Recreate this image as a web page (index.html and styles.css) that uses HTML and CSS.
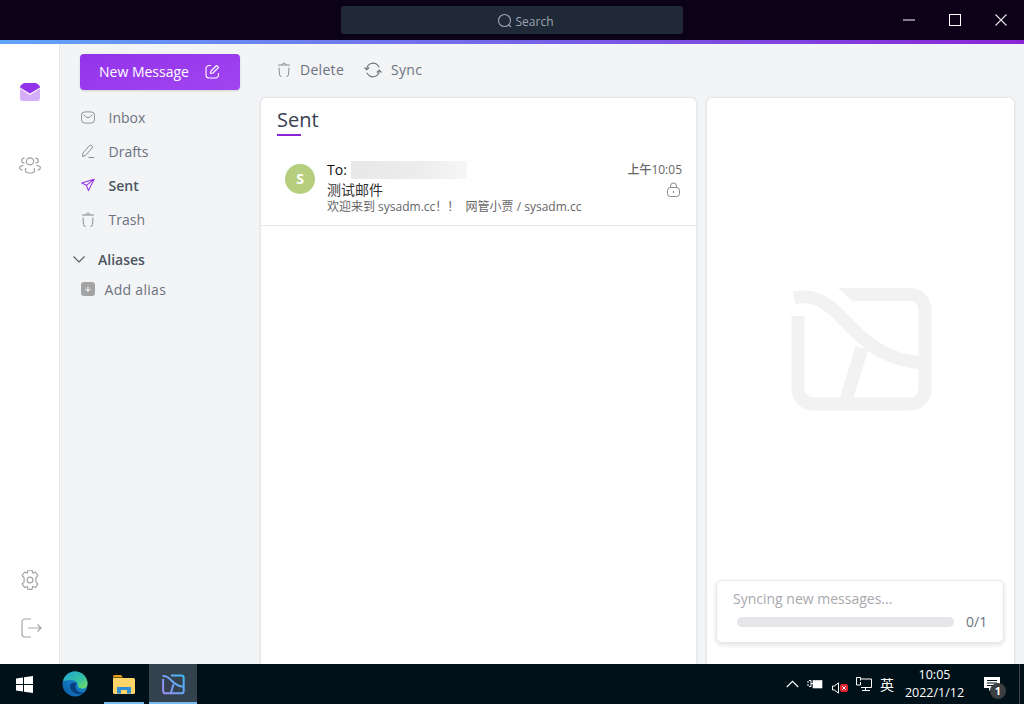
FILE: index.html
```html
<!DOCTYPE html>
<html>
  <head>
    <title>Sent</title>
    <meta charset="utf-8">
    <link rel="stylesheet" href="styles.css">
  </head>
  <body>
    <div class="titlebar">
      <div class="search">
        <svg width="16" height="16" viewBox="0 0 16 16" fill="none" stroke="#9ca3af" stroke-width="1.1"><circle cx="7.5" cy="7.5" r="6"/><path d="M12 12l2 2"/></svg>
        <span>Search</span>
      </div>
      <div class="winctl">
        <button class="winbtn"><svg width="12" height="12" viewBox="0 0 12 12"><path d="M0 6h12" stroke="#b8b3c0" stroke-width="1.4"/></svg></button>
        <button class="winbtn"><svg width="12" height="12" viewBox="0 0 12 12"><rect x=".5" y=".5" width="11" height="11" fill="none" stroke="#fff"/></svg></button>
        <button class="winbtn"><svg width="12" height="12" viewBox="0 0 12 12"><path d="M.5.5l11 11M11.5.5l-11 11" stroke="#e4e2e8" stroke-width="1.1"/></svg></button>
      </div>
    </div>
    <div class="accent"></div>

    <div class="app">
      <div class="rail">
        <div class="rail-top">
          <svg class="rail-mail" width="20" height="18" viewBox="0 0 20 18">
            <path d="M0 5.500L10 12l10-6.500V15a3 3 0 0 1-3 3H3a3 3 0 0 1-3-3z" fill="#d4aef8"/>
            <path d="M0 4.500C0 3 1 1.800 2.500 1L4 0h12l1.500 1C19 1.800 20 3 20 4.500L10 10.500z" fill="#9333ea"/>
          </svg>
          <svg class="rail-people" width="22" height="20" viewBox="0 0 24 20" fill="none" stroke="#9b9ea3" stroke-width="1.2">
            <ellipse cx="12" cy="6" rx="4" ry="3.800"/>
            <path d="M8 13.500c-1.500 1-1.500 3.500 0 4.300 2 1 6 1 8 0 1.500-.8 1.500-3.300 0-4.300"/>
            <path d="M6 2.500C4 2.500 3 4 3 5.300S4 8 6 8M18 2.500c2 0 3 1.500 3 2.800S20 8 18 8"/>
            <path d="M5 10.500c-3 0-4.300 1.500-4.300 2.500s1 2.200 3.300 2.400M19 10.500c3 0 4.300 1.500 4.300 2.500s-1 2.200-3.300 2.400"/>
          </svg>
        </div>
        <div class="rail-bottom">
          <svg width="20" height="20" viewBox="1 1 18 18" fill="none" stroke="#a3a5a9" stroke-width="1.100"><circle cx="10" cy="10" r="2.600"/><path d="M8.200 1.200h3.600l.6 2.600 2.400-1 2.300 3.200-1.800 2 0 3.800 1.800 1.700-2.300 3.300-2.400-1-.6 2.700H8.200l-.6-2.700-2.400 1-2.300-3.300 1.800-1.700V8l-1.800-2 2.300-3.200 2.400 1z" stroke-linejoin="round"/></svg>
          <svg class="rail-exit" width="21" height="20" viewBox="0 0 21 20" fill="none" stroke="#a3a5a9" stroke-width="1.200"><path d="M10 1H4a3 3 0 0 0-3 3v12a3 3 0 0 0 3 3h6M7 10h13M16.500 6.500L20 10l-3.500 3.500"/></svg>
        </div>
      </div>

      <div class="sidebar">
        <button class="compose">
          <span>New Message</span>
          <svg width="15" height="15" viewBox="0 0 15 15" fill="none" stroke="#fff" stroke-width="1.100"><path d="M6 1.500H4a3 3 0 0 0-3 3v6.500a3 3 0 0 0 3 3h6.500a3 3 0 0 0 3-3V9"/><path d="M5.500 9.500l.5-2.500L11.500 1.500l2 2L8 9z" stroke-linejoin="round"/></svg>
        </button>
        <ul class="folders">
          <li class="folder">
            <svg width="14" height="13" viewBox="0 0 15 13" fill="none" stroke="#8b8d92" stroke-width="1"><rect x=".5" y=".5" width="14" height="12" rx="3.500"/><path d="M3 3.500c2 2.500 3 3 4.500 3s2.500-.5 4.500-3"/></svg>
            <span>Inbox</span>
          </li>
          <li class="folder">
            <svg width="14" height="14" viewBox="0 0 14 14" fill="none" stroke="#8b8d92" stroke-width="1"><path d="M1.500 12.500L2 9 8.500 1.500a1.500 1.500 0 0 1 2 0l.5.500a1.500 1.500 0 0 1 0 2L4.500 11.500z" stroke-linejoin="round"/><path d="M7.500 13.500H13"/></svg>
            <span>Drafts</span>
          </li>
          <li class="folder active">
            <svg width="14" height="14" viewBox="0 0 15 14" fill="none" stroke="#9333ea" stroke-width="1.100"><path d="M14 .8L.8 4.800l5 2.500L8 13z" stroke-linejoin="round"/><path d="M14 .8L5.800 7.300"/></svg>
            <span>Sent</span>
          </li>
          <li class="folder">
            <svg width="14" height="15" viewBox="0 0 14 15" fill="none" stroke="#8b8d92" stroke-width="1"><path d="M1 3h12M5 3c0-2.500 4-2.500 4 0M2 5.500l.5 7a2 2 0 0 0 2 2M12 5.500l-.5 7a2 2 0 0 1-2 2"/></svg>
            <span>Trash</span>
          </li>
        </ul>
        <div class="aliases-head">
          <svg width="12" height="7" viewBox="0 0 12 7" fill="none" stroke="#55585e" stroke-width="1.100"><path d="M.5.500L6 6l5.500-5.500"/></svg>
          <span>Aliases</span>
        </div>
        <div class="add-alias">
          <span class="plus">+</span>
          <span>Add alias</span>
        </div>
      </div>

      <div class="main">
        <div class="toolbar">
          <div class="tool">
            <svg width="14" height="15" viewBox="0 0 14 15" fill="none" stroke="#8b8d92" stroke-width="1"><path d="M1 3h12M5 3c0-2.500 4-2.500 4 0M2 5.500l.5 7a2 2 0 0 0 2 2M12 5.500l-.5 7a2 2 0 0 1-2 2"/></svg>
            <span>Delete</span>
          </div>
          <div class="tool">
            <svg width="18" height="16" viewBox="0 0 18 16" fill="none" stroke="#6b6e73" stroke-width="1.1"><path d="M2.800 7.500a6.300 6.300 0 0 1 11.400-3.700l1 1.400M15.200 8.500a6.300 6.300 0 0 1-11.400 3.700l-1-1.400"/><path d="M.5 5.500l2.300 2.300 2.400-2.300M12.800 10.500l2.400-2.300 2.300 2.300"/></svg>
            <span>Sync</span>
          </div>
        </div>
        <div class="panes">
          <div class="card list">
            <div class="list-title">
              <h1>Sent</h1>
            </div>
            <div class="msg">
              <div class="avatar">S</div>
              <div class="msg-body">
                <div class="msg-to">To: <span class="blurred"></span></div>
                <div class="msg-subject">测试邮件</div>
                <div class="msg-snippet">欢迎来到 sysadm.cc！！&nbsp; 网管小贾 / sysadm.cc</div>
              </div>
              <div class="msg-meta">
                <span>上午10:05</span>
                <svg width="13" height="15" viewBox="0 0 13 15" fill="none" stroke="#85878c" stroke-width="1"><rect x=".5" y="5.500" width="12" height="9" rx="3"/><path d="M3.500 5.500V4a3 3 0 0 1 6 0v1.500M6.500 9v2"/></svg>
              </div>
            </div>
          </div>
          <div class="card preview">
            <div class="logo-area">
              <svg class="logo" width="142" height="123" viewBox="0 0 142 123" fill="none" stroke="#f2f2f3" stroke-width="13">
                <path d="M47 0L61 13H66V0z" fill="#f2f2f3" stroke="none"/>
                <path d="M62 6.500H119a15 15 0 0 1 15 15V101a15 15 0 0 1-15 15H22a15 15 0 0 1-15-15V28"/>
                <path d="M3 10C20 6 32 12 45 24C65 43 85 73 134 75"/>
                <path d="M71 60L55 112"/>
              </svg>
            </div>
            <div class="sync">
              <div class="sync-label">Syncing new messages...</div>
              <div class="sync-row">
                <div class="sync-bar"></div>
                <span>0/1</span>
              </div>
            </div>
          </div>
        </div>
      </div>
    </div>

    <div class="taskbar">
      <div class="task start">
        <svg width="17" height="17" viewBox="0 0 17 17" fill="#fff"><path d="M0 2.500l7-1v6.500H0zM8 1.300L17 0v8H8zM0 9h7v6.500l-7-1zM8 9h9v8l-9-1.300z"/></svg>
      </div>
      <div class="task edge-task">
        <svg width="26" height="26" viewBox="0 0 26 26">
          <defs>
            <linearGradient id="edgeA" x1="0" y1="1" x2="1" y2="0"><stop offset="0" stop-color="#0c59a4"/><stop offset="1" stop-color="#1b9de2"/></linearGradient>
            <linearGradient id="edgeB" x1="0" y1="0" x2="1" y2="1"><stop offset="0" stop-color="#1fa6d8"/><stop offset=".6" stop-color="#35c1a1"/><stop offset="1" stop-color="#7ee05a"/></linearGradient>
          </defs>
          <circle cx="13" cy="13" r="12.500" fill="url(#edgeA)"/>
          <path d="M1 10C3 3 9 .5 13 .5c7 0 12.500 5.500 12.500 12 0 3-2 5-5.500 5-2.500 0-4-1-4-2.500 0-3-2.500-6-6.500-6-3.500 0-7 1-8.500 1z" fill="url(#edgeB)"/>
          <path d="M8 15c0 5 5 9 11 8 1 0 2-1 3-2-3 1-7 0-8-3-1-2-.5-5 1-6-4-1-7 0-7 3z" fill="#0a3f80"/>
        </svg>
      </div>
      <div class="task running">
        <svg width="22" height="19" viewBox="0 0 22 19">
          <path d="M0 1.500A1.500 1.500 0 0 1 1.500 0H8l2 2.500H0z" fill="#e09f14"/>
          <path d="M0 3h20.500A1.500 1.500 0 0 1 22 4.500V17.500A1.500 1.500 0 0 1 20.500 19H1.500A1.500 1.500 0 0 1 0 17.500z" fill="#fdd667"/>
          <path d="M4 18.500V12h14v6.500h-4V15H8v3.500z" fill="#2f8fd6"/>
        </svg>
      </div>
      <div class="task running current">
        <svg width="23" height="21" viewBox="0 0 142 123" fill="none" stroke="url(#appGrad)" stroke-width="12">
          <defs>
            <linearGradient id="appGrad" gradientUnits="userSpaceOnUse" x1="0" y1="123" x2="142" y2="0"><stop offset="0" stop-color="#a78bfa"/><stop offset="1" stop-color="#38bdf8"/></linearGradient>
          </defs>
          <path d="M55 6.500H119a15 15 0 0 1 15 15V101a15 15 0 0 1-15 15H22a15 15 0 0 1-15-15V28"/>
          <path d="M3 10C20 6 32 12 45 24C65 43 85 73 134 75"/>
          <path d="M71 60L55 112"/>
        </svg>
      </div>
      <div class="tray">
        <svg class="tray-chevron" width="13" height="8" viewBox="0 0 13 8" fill="none" stroke="#fff" stroke-width="1.100"><path d="M.8 7L6.500 1.300 12.200 7"/></svg>
        <svg class="tray-power" width="16" height="11" viewBox="0 0 16 11" fill="none" stroke="#fff"><path d="M0 3h2M0 6h2M2 1.500h2v6H2M4 4.500h2"/><rect x="6" y="1.500" width="9" height="7.500" fill="#fff" stroke="#fff" stroke-width=".6"/></svg>
        <span class="tray-volume">
          <svg width="7" height="12" viewBox="0 0 7 12" fill="none" stroke="#fff"><path d="M.5 4H2.500L6.500 .8v10.400L2.500 8H.5z"/></svg>
          <svg class="mute" width="8" height="8" viewBox="0 0 8 8"><rect width="8" height="8" rx="2" fill="#e0232e"/><path d="M2.200 2.200l3.600 3.600M5.800 2.200L2.200 5.800" stroke="#fff"/></svg>
        </span>
        <svg class="tray-net" width="16" height="15" viewBox="0 0 16 15" fill="none" stroke="#fff"><path d="M.5.500h4v3M4.500 2H15.500v8.500H5M9.500 10.500v3M6 13.500h8M.5.500V8h4V5"/></svg>
        <span class="tray-ime">英</span>
        <div class="clock">
          <span>10:05</span>
          <span>2022/1/12</span>
        </div>
        <div class="notify">
          <svg width="16" height="14" viewBox="0 0 16 14"><path d="M0 0h16v11H8l-3 3v-3H0z" fill="#fff"/><path d="M3 3.500h10M3 6h10M3 8.500h7" stroke="#001320"/></svg>
          <span class="notify-count">1</span>
        </div>
      </div>
    </div>
  </body>
</html>
```

FILE: styles.css
```css
* { box-sizing: border-box; }
html, body { height: 100%; }
body { margin: 0; display: flex; flex-direction: column; height: 704px; overflow: hidden; font-family: "Open Sans", "Noto Sans CJK SC", sans-serif; color: #4b5563; background: #f3f4f6; }
ul { list-style: none; margin: 0; padding: 0; }
button { font: inherit; border: none; background: none; padding: 0; }

.titlebar { height: 40px; background: #0c0218; display: flex; align-items: center; justify-content: center; position: relative; flex: none; }
.search { width: 342px; height: 28px; padding: 2px 0 0 26px; background: #1f2937; border-radius: 3px; display: flex; align-items: center; justify-content: center; gap: 3px; font-size: 12px; color: #9ca3af; }
.winctl { position: absolute; top: 0; right: 0; height: 40px; display: flex; }
.winbtn { width: 46px; height: 40px; display: flex; align-items: center; justify-content: center; }
.accent { height: 4px; flex: none; background: linear-gradient(to right, #60a5fa, #8b25d8); }

.app { flex: 1; display: flex; min-height: 0; }
.rail { width: 60px; flex: none; background: #fff; border-right: 1px solid #e5e7eb; display: flex; flex-direction: column; justify-content: space-between; align-items: center; padding: 39px 0 26px; }
.rail-top, .rail-bottom { display: flex; flex-direction: column; align-items: center; }
.rail-people { margin-top: 54px; }
.rail-bottom { gap: 28px; }
.rail-exit { margin-left: 3px; }

.sidebar { width: 200px; flex: none; padding: 10px 20px 0; }
.compose { width: 160px; height: 36px; border-radius: 4px; background: linear-gradient(to bottom right, #9333ea, #a145f0); color: #fff; font-size: 14px; font-weight: 500; display: flex; align-items: center; justify-content: space-between; padding: 0 20px 2px 19px; box-shadow: 0 1px 2px rgba(0, 0, 0, 0.15); }
.folders { margin-top: 10px; }
.folder { height: 34px; display: flex; align-items: center; gap: 13.500px; font-size: 14px; color: #6b7280; }
.folder svg { flex: none; margin-left: 1px; }
.folder.active { color: #4b5563; font-weight: 600; }
.aliases-head { margin: 6px 0 0 -7px; height: 34px; display: flex; align-items: center; gap: 13px; font-size: 14px; font-weight: 600; color: #4b5563; }
.add-alias { height: 26px; display: flex; align-items: center; gap: 9.500px; padding-left: 1px; font-size: 14px; letter-spacing: 0.3px; color: #6b7280; }
.plus { width: 14px; height: 14px; border-radius: 3px; background: #a3a3a3; color: #e5e5e5; font-size: 11px; font-weight: 700; line-height: 13px; text-align: center; }

.main { flex: 1; min-width: 0; display: flex; flex-direction: column; }
.toolbar { height: 53px; flex: none; display: flex; align-items: center; gap: 20px; padding: 0 17px 2px; }
.tool { display: flex; align-items: center; gap: 9px; font-size: 14px; color: #6b7280; letter-spacing: 0.3px; }
.panes { flex: 1; min-height: 0; display: flex; gap: 9px; padding: 0 9px 0 0; }
.card { background: #fff; border: 1px solid #e5e7eb; border-bottom: none; border-radius: 6px 6px 0 0; box-shadow: 0 1px 3px rgba(0, 0, 0, 0.08); }
.list { width: 437px; flex: none; }
.list-title { padding: 8px 16px 0; height: 51px; }
.list-title h1 { margin: 0; display: inline-block; font-size: 20px; font-weight: 500; line-height: 28px; color: #374151; position: relative; }
.list-title h1::after { content: ""; position: absolute; left: 0; bottom: -2px; width: 24px; height: 2px; background: #8b25d8; }
.msg { height: 77px; display: flex; border-bottom: 1px solid #e5e7eb; padding: 0 14px 0 24px; }
.avatar { width: 30px; height: 30px; margin-top: 15px; border-radius: 50%; background: #b5cf7e; color: #fff; font-size: 14px; font-weight: 700; line-height: 30px; text-align: center; flex: none; }
.msg-body { flex: 1; margin-left: 12px; padding-top: 11px; }
.msg-to { height: 20px; font-size: 14px; font-weight: 500; color: #111; display: flex; align-items: center; gap: 4px; line-height: 20px; }
.blurred { width: 116px; height: 18px; background: linear-gradient(to right, #e8e8e8, #ececec 55%, #f6f6f6); }
.msg-subject { font-size: 14px; color: #333; line-height: 20px; }
.msg-snippet { font-size: 12px; color: #666; line-height: 14px; }
.msg-meta { padding-top: 12px; font-size: 12px; font-weight: 500; color: #666; display: flex; flex-direction: column; align-items: flex-end; gap: 3px; line-height: 18px; }
.msg-meta svg { margin-right: 2px; }
.preview { flex: 1; min-width: 0; display: flex; flex-direction: column; padding: 0 10px 21px 9px; }
.logo-area { flex: 1; min-height: 0; padding-top: 20px; display: flex; align-items: center; justify-content: center; }
.logo { margin-left: 4px; }
.sync { height: 63px; background: #fff; border: 1px solid #e5e7eb; border-radius: 6px; box-shadow: 0 2px 5px rgba(0, 0, 0, 0.12); padding: 8px 16px 0; }
.sync-label { font-size: 14px; color: #a8a8ad; line-height: 20px; }
.sync-row { display: flex; align-items: center; gap: 12px; margin-top: 3px; padding-left: 4px; font-size: 14px; color: #6b7280; }
.sync-bar { width: 217px; height: 10px; flex: none; border-radius: 5px; background: #e5e5ea; }

.taskbar { height: 40px; flex: none; background: #011119; display: flex; color: #fff; }
.task { width: 48px; height: 40px; display: flex; align-items: center; justify-content: center; position: relative; }
.edge-task { width: 52px; padding-left: 2px; }
.running::after { content: ""; position: absolute; left: 4px; right: 4px; bottom: 0; height: 2px; background: #76b9ed; }
.current { width: 48px; background: #33424c; margin-left: 1px; }
.current::after { left: 0; right: 0; }
.tray { margin-left: auto; display: flex; align-items: center; padding-right: 4px; }
.tray-chevron { margin-right: 8px; }
.tray-power { margin-right: 9px; }
.tray-volume { width: 18px; height: 15px; position: relative; margin-right: 6px; }
.mute { position: absolute; left: 8px; bottom: 0; }
.tray-net { margin-right: 8px; }
.tray-ime { font-size: 14px; font-family: "Noto Sans CJK SC", sans-serif; margin-right: 3px; }
.clock { width: 75px; margin-right: 10px; display: flex; flex-direction: column; align-items: center; font-size: 12.500px; line-height: 18px; }
.notify { width: 38px; height: 40px; padding-left: 2px; display: flex; align-items: center; position: relative; border-right: 1px solid #444; }
.notify-count { position: absolute; left: 8px; top: 19px; width: 16px; height: 16px; border-radius: 50%; background: #3b3f42; font-size: 11px; font-weight: 700; line-height: 16px; text-align: center; }
```
